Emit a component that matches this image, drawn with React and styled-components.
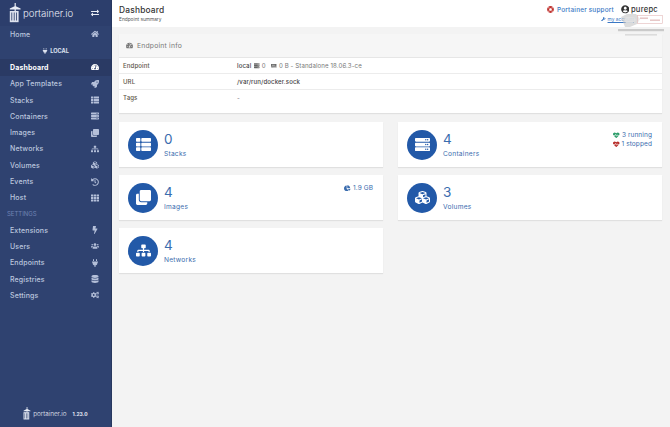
import React from 'react';
import styled, { createGlobalStyle } from 'styled-components';
import {
  FaHome, FaRocket, FaThList, FaServer, FaClone, FaSitemap, FaCubes, FaHistory,
  FaTh, FaBolt, FaUsers, FaPlug, FaDatabase, FaCogs, FaTachometerAlt, FaExchangeAlt,
  FaLifeRing, FaUserCircle, FaWrench, FaMemory, FaChartPie, FaHeartbeat,
} from 'react-icons/fa';

const GlobalStyle = createGlobalStyle`
  html, body { margin: 0; padding: 0; height: 100%; }
  body { font-family: "Inter", "Noto Sans", sans-serif; background: #fff; overflow: hidden; }
  * { box-sizing: border-box; }
`;

const Page = styled.div`
  display: flex;
  width: 670px;
  height: 427px;
  overflow: hidden;
`;

const Sidebar = styled.aside`
  width: 112px;
  flex: none;
  display: flex;
  flex-direction: column;
  background: #2f4270;
  border-right: 1px solid #27375f;
`;

const Brand = styled.div`
  height: 26px;
  display: flex;
  align-items: center;
  justify-content: space-between;
  padding: 0 12px 0 9px;
  background: #2c3e6c;
  color: #e8ecf5;
`;

const BrandLeft = styled.span`
  display: flex;
  align-items: center;
  gap: 2px;
  font-weight: 300;
  font-size: ${(p) => p.$size || 9.6}px;
`;

const NavRow = styled.div`
  height: 16.3px;
  display: flex;
  align-items: center;
  justify-content: space-between;
  padding: 0 12px 0 10px;
  font-size: 7px;
  letter-spacing: 0.15px;
  font-weight: ${(p) => (p.$active ? 700 : 500)};
  color: ${(p) => (p.$active ? '#fff' : '#bcc6de')};
  background: ${(p) => (p.$active ? '#2a3a64' : 'transparent')};
  svg { width: 8px; height: 8px; color: ${(p) => (p.$active ? '#fff' : '#b4bfd9')}; }
`;

const EndpointLabel = styled.div`
  height: 17px;
  display: flex;
  align-items: center;
  justify-content: center;
  gap: 2px;
  font-size: 5.6px;
  font-weight: 700;
  color: #dfe4f0;
  svg { width: 6px; height: 6px; }
`;

const SectionTitle = styled.div`
  height: 16px;
  display: flex;
  align-items: center;
  padding-left: 7px;
  font-size: 6px;
  color: #6f82b4;
`;

const SidebarFooter = styled.div`
  margin-top: auto;
  height: 27px;
  display: flex;
  align-items: center;
  justify-content: center;
  gap: 6px;
  color: #e8ecf5;
`;

const Version = styled.span`
  font-size: 5px;
  font-weight: 700;
`;

const Main = styled.main`
  flex: 1;
  min-width: 0;
  display: flex;
  flex-direction: column;
  background: #f3f3f3;
`;

const Header = styled.header`
  position: relative;
  height: 27px;
  flex: none;
  background: #fff;
  display: flex;
  justify-content: space-between;
  padding: 5px 12px 0 7px;
`;

const PageTitle = styled.div`
  font-size: 8.4px;
  font-weight: 500;
  line-height: 10px;
  color: #333;
  letter-spacing: 0.2px;
`;

const PageSub = styled.div`
  font-size: 4.8px;
  line-height: 8px;
  color: #555;
`;

const HeaderRight = styled.div`
  display: flex;
  flex-direction: column;
  align-items: flex-end;
`;

const SupportRow = styled.div`
  display: flex;
  align-items: center;
  gap: 7px;
  height: 9px;
`;

const Support = styled.span`
  display: flex;
  align-items: center;
  gap: 3px;
  font-size: 6.4px;
  font-weight: 500;
  letter-spacing: 0.2px;
  color: #3b78c4;
  svg { width: 7px; height: 7px; color: #c0302c; }
`;

const UserName = styled.span`
  display: flex;
  align-items: center;
  gap: 1.5px;
  font-size: 7.6px;
  font-weight: 500;
  letter-spacing: 0.25px;
  color: #333;
  svg { width: 8.5px; height: 8.5px; }
`;

const AccountLink = styled.div`
  display: flex;
  align-items: center;
  gap: 2px;
  margin: 2px 24px 0 0;
  font-size: 4.8px;
  text-decoration: underline;
  color: #3b78c4;
  svg { width: 4.5px; height: 4.5px; }
`;

const Watermark = styled.svg`
  position: absolute;
  top: 12px;
  right: 5px;
  width: 48px;
  height: 28px;
`;

const Content = styled.div`
  flex: 1;
  padding: 7px 8px 0 7px;
  display: flex;
  flex-direction: column;
  gap: 9px;
`;

const Card = styled.section`
  background: #fff;
  box-shadow: 0 1px 1px rgba(0, 0, 0, 0.08);
`;

const CardHeading = styled.div`
  height: 24px;
  display: flex;
  align-items: center;
  gap: 4px;
  padding-left: 7px;
  background: #f6f6f6;
  border-bottom: 1px solid #e6e6e6;
  font-size: 6.8px;
  color: #767676;
  letter-spacing: 0.2px;
  svg { width: 7px; height: 7px; }
`;

const InfoRow = styled.div`
  display: grid;
  grid-template-columns: 114px 1fr;
  align-items: start;
  height: ${(p) => p.$height || 16}px;
  padding: 4px 0 0 4px;
  border-bottom: ${(p) => (p.$last ? 'none' : '1px solid #ececec')};
  font-size: 6.1px;
  line-height: 8px;
  letter-spacing: 0.1px;
  color: #444;
`;

const InfoKey = styled.span`
  color: #5c5648;
  font-weight: 500;
`;

const InfoValue = styled.span`
  display: flex;
  align-items: center;
  gap: 2px;
  color: #777;
  b { font-weight: 500; color: #444; margin-right: 1px; }
  svg { width: 5.5px; height: 5.5px; color: #666; }
`;

const Grid = styled.div`
  display: grid;
  grid-template-columns: 264px 264px;
  justify-content: space-between;
  grid-auto-rows: 45px;
  gap: 8px 15px;
`;

const Widget = styled(Card)`
  position: relative;
  display: flex;
  align-items: center;
  padding-left: 9px;
  gap: 6px;
`;

const Circle = styled.div`
  width: 30px;
  height: 30px;
  border-radius: 50%;
  flex: none;
  display: flex;
  align-items: center;
  justify-content: center;
  background: #2259a8;
  color: #fff;
  svg { width: 15px; height: 15px; }
`;

const Stat = styled.div`
  color: #3a6cae;
`;

const StatValue = styled.div`
  font-size: 13.5px;
  line-height: 16px;
  font-weight: 400;
`;

const StatLabel = styled.div`
  font-size: 6.6px;
  line-height: 9px;
  margin-top: 3px;
  letter-spacing: 0.25px;
`;

const Badge = styled.div`
  position: absolute;
  top: 9px;
  right: 10px;
  display: flex;
  flex-direction: column;
  align-items: flex-end;
  gap: 1px;
`;

const BadgeLine = styled.span`
  display: flex;
  align-items: center;
  gap: 2px;
  height: 8px;
  font-size: 6.5px;
  letter-spacing: 0.1px;
  color: #3a6cae;
  svg { width: 6.5px; height: 6.5px; color: ${(p) => p.$tint || '#3a6cae'}; }
`;

function Crane({ size = 20 }) {
  return (
    <svg width={size * 0.6} height={size} viewBox="0 0 15 25" fill="currentColor">
      <path d="M7 0h1.5v4l6 3v1H8.5v2H7V8H1V7l6-3z" />
      <path d="M1 10h11v14H1z" opacity="0.95" />
      <path d="M3 12h1v10H3zm3 0h1v10H6zm3 0h1v10H9z" fill="#2c3e6c" />
    </svg>
  );
}

const navTop = [
  ['Stacks', FaThList],
  ['Containers', FaServer],
  ['Images', FaClone],
  ['Networks', FaSitemap],
  ['Volumes', FaCubes],
  ['Events', FaHistory],
  ['Host', FaTh],
];

const navSettings = [
  ['Extensions', FaBolt],
  ['Users', FaUsers],
  ['Endpoints', FaPlug],
  ['Registries', FaDatabase],
  ['Settings', FaCogs],
];

const widgets = [
  { icon: FaThList, value: 0, label: 'Stacks' },
  {
    icon: FaServer,
    value: 4,
    label: 'Containers',
    badge: [
      ['3 running', FaHeartbeat, '#2e9e6b'],
      ['1 stopped', FaHeartbeat, '#b8302c'],
    ],
  },
  { icon: FaClone, value: 4, label: 'Images', badge: [['1.9 GB', FaChartPie]] },
  { icon: FaCubes, value: 3, label: 'Volumes' },
  { icon: FaSitemap, value: 4, label: 'Networks' },
];

export default function App() {
  return (
    <Page>
      <GlobalStyle />
      <Sidebar>
        <Brand>
          <BrandLeft><Crane />portainer.io</BrandLeft>
          <FaExchangeAlt size={8} />
        </Brand>
        <NavRow>Home<FaHome /></NavRow>
        <EndpointLabel><FaPlug />LOCAL</EndpointLabel>
        <NavRow $active>Dashboard<FaTachometerAlt /></NavRow>
        <NavRow>App Templates<FaRocket /></NavRow>
        {navTop.map(([name, Icon]) => (
          <NavRow key={name}>{name}<Icon /></NavRow>
        ))}
        <SectionTitle>SETTINGS</SectionTitle>
        {navSettings.map(([name, Icon]) => (
          <NavRow key={name}>{name}<Icon /></NavRow>
        ))}
        <SidebarFooter>
          <BrandLeft $size={6.4}><Crane size={13} />portainer.io</BrandLeft>
          <Version>1.23.0</Version>
        </SidebarFooter>
      </Sidebar>
      <Main>
        <Header>
          <div>
            <PageTitle>Dashboard</PageTitle>
            <PageSub>Endpoint summary</PageSub>
          </div>
          <HeaderRight>
            <SupportRow>
              <Support><FaLifeRing />Portainer support</Support>
              <UserName><FaUserCircle />purepc</UserName>
            </SupportRow>
            <AccountLink><FaWrench />my account</AccountLink>
          </HeaderRight>
          <Watermark viewBox="0 0 48 28">
            <path d="M4 5l6-3h9l4 5-3 5-7 3H8z" fill="#c4c4c4" opacity="0.6" />
            <path d="M9 5h8l2 3-3 3H9l-2-3z" fill="#e4e4e4" opacity="0.8" />
            <rect x="20.5" y="3.5" width="25" height="8" fill="#fff" fillOpacity="0.4" stroke="#e3b9b9" strokeWidth="0.6" />
            <rect x="23" y="5.5" width="8" height="1.4" fill="#d49a9a" opacity="0.6" />
            <rect x="33" y="7.5" width="10" height="1.4" fill="#d49a9a" opacity="0.6" />
            <rect x="1" y="17" width="46" height="2.2" fill="#a8a8a8" opacity="0.55" />
            <rect x="8" y="22" width="32" height="1.6" fill="#bcbcbc" opacity="0.45" />
          </Watermark>
        </Header>
        <Content>
          <Card>
            <CardHeading><FaTachometerAlt />Endpoint info</CardHeading>
            <InfoRow>
              <InfoKey>Endpoint</InfoKey>
              <InfoValue>
                <b>local</b><FaServer /> 0 &nbsp;<FaMemory /> 0 B - Standalone 18.06.3-ce
              </InfoValue>
            </InfoRow>
            <InfoRow>
              <InfoKey>URL</InfoKey>
              <InfoValue><b>/var/run/docker.sock</b></InfoValue>
            </InfoRow>
            <InfoRow $last $height={23}>
              <InfoKey>Tags</InfoKey>
              <InfoValue>-</InfoValue>
            </InfoRow>
          </Card>
          <Grid>
            {widgets.map(({ icon: Icon, value, label, badge }) => (
              <Widget key={label}>
                <Circle><Icon /></Circle>
                <Stat>
                  <StatValue>{value}</StatValue>
                  <StatLabel>{label}</StatLabel>
                </Stat>
                {badge && (
                  <Badge>
                    {badge.map(([text, BadgeIcon, tint]) => (
                      <BadgeLine key={text} $tint={tint}><BadgeIcon />{text}</BadgeLine>
                    ))}
                  </Badge>
                )}
              </Widget>
            ))}
          </Grid>
        </Content>
      </Main>
    </Page>
  );
}
